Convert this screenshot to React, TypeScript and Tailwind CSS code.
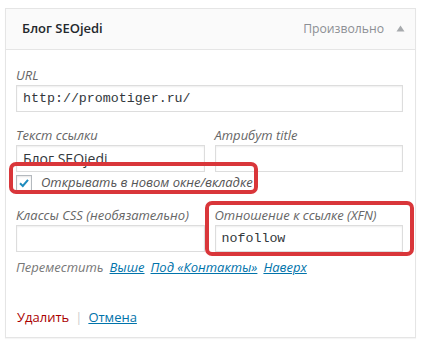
const Field = ({ label, value, mono }: { label: string; value?: string; mono?: boolean }) => (
  <div className="flex flex-col">
    <label className="italic text-[13px] leading-[16px] text-[#666] h-[17px]">{label}</label>
    <div
      className={`mt-[1px] h-[27px] border border-[#ddd] shadow-[inset_0_1px_2px_rgba(0,0,0,0.07)] px-[6px] flex items-center text-[#32373c] ${
        mono ? "font-['Liberation_Mono',monospace] text-[13.3px] text-[#3c3c3c]" : "text-[14px]"
      }`}
    >
      {value}
    </div>
  </div>
);

const App = () => {
  return (
    <div className="relative w-[424px] h-[342px] bg-white font-['Open_Sans',sans-serif] overflow-hidden">
      <div className="ml-[5px] mt-[8px] w-[411px] h-[330px] border border-[#e5e5e5] shadow-[0_1px_1px_rgba(0,0,0,0.04)] flex flex-col">
        <div className="h-[41px] bg-[#fafafa] border-b border-[#e5e5e5] flex items-center justify-between pl-[16px] pr-[10px]">
          <span className="text-[13px] font-semibold text-[#23282d]">Блог SEOjedi</span>
          <span className="flex items-center gap-[12px] text-[12.2px] text-[#8c8f94]">
            Произвольно
            <svg width="9" height="7" viewBox="0 0 9 7">
              <path d="M4.5 0.5 L8.5 6.5 L0.5 6.5 Z" fill="#a7aaad" />
            </svg>
          </span>
        </div>
        <div className="pl-[10px] pr-[12px] pt-[17px] flex flex-col">
          <Field label="URL" value="http://promotiger.ru/" mono />
          <div className="mt-[15px] grid grid-cols-2 gap-x-[10px]">
            <Field label="Текст ссылки" value="Блог SEOjedi" />
            <Field label="Атрибут title" />
          </div>
          <label className="mt-[2px] h-[18px] flex items-center gap-[9px]">
            <span className="w-[16px] h-[16px] border border-[#b4b9be] bg-white shadow-[inset_0_1px_2px_rgba(0,0,0,0.1)] flex items-center justify-center">
              <svg width="12" height="12" viewBox="0 0 12 12">
                <path d="M2 6.2 L4.8 9 L10 2.8" fill="none" stroke="#1e8cbe" strokeWidth="2" />
              </svg>
            </span>
            <span className="italic text-[13px] text-[#555]">Открывать в новом окне/вкладке</span>
          </label>
          <div className="mt-[15px] grid grid-cols-2 gap-x-[10px]">
            <Field label="Классы CSS (необязательно)" />
            <Field label="Отношение к ссылке (XFN)" value="nofollow" mono />
          </div>
          <div className="mt-[6px] flex items-center gap-[6px] italic text-[13px]">
            <span className="text-[#777]">Переместить</span>
            <a className="text-[#0073aa] underline">Выше</a>
            <a className="text-[#0073aa] underline">Под «Контакты»</a>
            <a className="text-[#0073aa] underline">Наверх</a>
          </div>
          <div className="mt-[30px] flex items-center text-[13px]">
            <a className="text-[#a00] ml-[1px]">Удалить</a>
            <span className="mx-[6px] text-[#ccc]">|</span>
            <a className="text-[#0073aa] underline">Отмена</a>
          </div>
        </div>
      </div>
      <div className="absolute left-[9px] top-[162px] w-[249px] h-[32px] border-[4px] border-[#d9363a] rounded-[7px]" />
      <div className="absolute left-[205px] top-[201px] w-[209px] h-[55px] border-[4px] border-[#d9363a] rounded-[7px]" />
    </div>
  );
};

export default App;
